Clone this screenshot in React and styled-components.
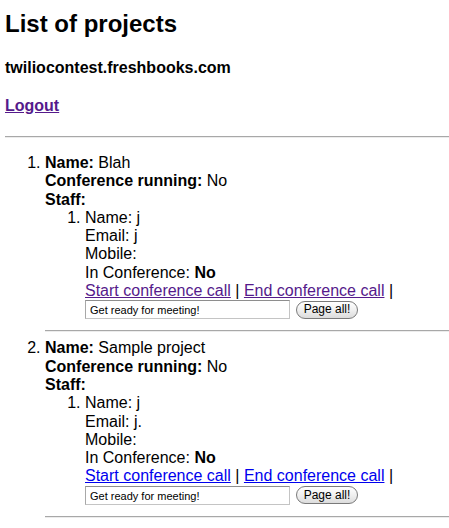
import React from 'react';
import styled, { createGlobalStyle } from 'styled-components';

const GlobalStyle = createGlobalStyle`
  html, body {
    margin: 0;
    padding: 0;
    background: #fff;
  }

  body {
    padding-left: 5px;
    font-family: "Liberation Sans", Arial, Helvetica, sans-serif;
    font-size: 16px;
    line-height: 18.3px;
    color: #000;
  }
`;

const Title = styled.h1`
  margin: 10px 0 0;
  font-size: 24px;
  line-height: 28px;
  font-weight: bold;
`;

const Site = styled.h3`
  margin: 21px 0 0;
  font-size: 16px;
  line-height: 18px;
  font-weight: bold;
`;

const LogoutLine = styled.h4`
  margin: 20px 0 0;
  font-size: 16px;
  line-height: 18px;
  font-weight: bold;
`;

const Link = styled.a`
  color: ${(p) => (p.$visited ? '#551a8b' : '#0000ee')};
  text-decoration: underline;
  cursor: pointer;
`;

const Rule = styled.hr`
  margin: ${(p) => (p.$inItem ? '11px 0 7px' : '21px 0 0')};
  height: 0;
  border: 0;
  border-top: 1px solid #a8a8a8;
  border-bottom: 1px solid #ececec;
`;

const Projects = styled.ol`
  margin: 16px 0 0;
  padding-left: 40px;
`;

const Staff = styled.ol`
  margin: 0;
  padding-left: 40px;
`;

const Line = styled.div``;

const Label = styled.b`
  font-weight: bold;
`;

const PageForm = styled.form`
  display: flex;
  align-items: center;
  gap: 6px;
  margin: 0;
  height: 19px;
`;

const MessageInput = styled.input`
  box-sizing: border-box;
  width: 205px;
  height: 19px;
  margin: 0;
  padding: 1px 4px 0;
  border: 1px solid #c4c4c4;
  border-top-color: #8e8e8e;
  border-left-color: #a8a8a8;
  font-family: "Liberation Sans", Arial, sans-serif;
  font-size: 11px;
  color: #000;
  background: #fff;
`;

const PageButton = styled.button`
  box-sizing: border-box;
  width: 62px;
  height: 18px;
  margin: 0;
  padding: 0 0 1px;
  border: 1px solid #7a7a7a;
  border-radius: 9px;
  background: linear-gradient(#ffffff, #f0f0f0 50%, #dcdcdc);
  font-family: "Liberation Sans", Arial, sans-serif;
  font-size: 12px;
  color: #000;
`;

const projects = [
  { name: 'Blah', visited: true, email: 'j' },
  { name: 'Sample project', visited: false, email: 'j.' },
];

const Project = ({ name, visited, email }) => (
  <li>
    <Line>
      <Label>Name:</Label> {name}
    </Line>
    <Line>
      <Label>Conference running:</Label> No
    </Line>
    <Line>
      <Label>Staff:</Label>
    </Line>
    <Staff>
      <li>
        <Line>Name: j</Line>
        <Line>Email: {email}</Line>
        <Line>Mobile:</Line>
        <Line>
          In Conference: <Label>No</Label>
        </Line>
        <Line>
          <Link $visited={visited}>Start conference call</Link> |{' '}
          <Link $visited={visited}>End conference call</Link> |
        </Line>
        <PageForm onSubmit={(e) => e.preventDefault()}>
          <MessageInput type="text" defaultValue="Get ready for meeting!" />
          <PageButton type="submit">Page all!</PageButton>
        </PageForm>
      </li>
    </Staff>
    <Rule $inItem />
  </li>
);

export default function App() {
  return (
    <>
      <GlobalStyle />
      <Title>List of projects</Title>
      <Site>twiliocontest.freshbooks.com</Site>
      <LogoutLine>
        <Link $visited>Logout</Link>
      </LogoutLine>
      <Rule />
      <Projects>
        {projects.map((p) => (
          <Project key={p.name} {...p} />
        ))}
      </Projects>
    </>
  );
}
